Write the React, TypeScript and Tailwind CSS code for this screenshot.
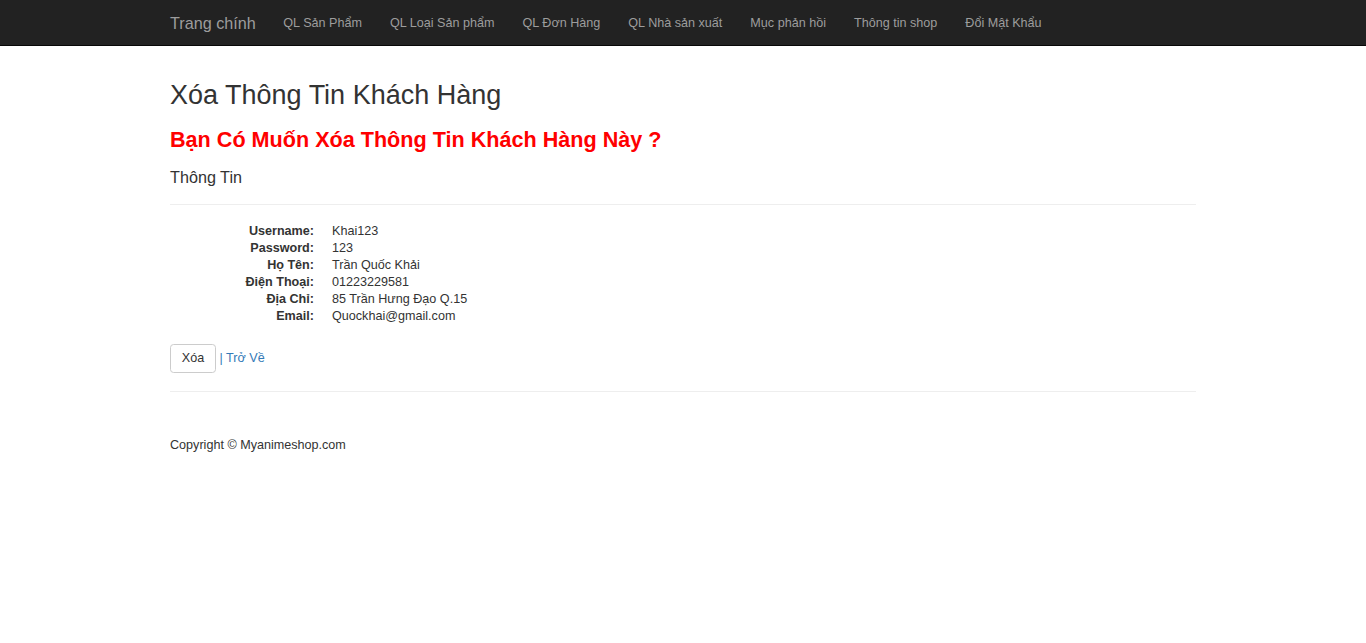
import React from "react";

const navLinks = [
  "QL Sản Phẩm",
  "QL Loại Sản phẩm",
  "QL Đơn Hàng",
  "QL Nhà sản xuất",
  "Mục phản hồi",
  "Thông tin shop",
  "Đổi Mật Khẩu",
];

const details = [
  { label: "Username:", value: "Khai123" },
  { label: "Password:", value: "123" },
  { label: "Họ Tên:", value: "Trần Quốc Khải" },
  { label: "Điện Thoại:", value: "01223229581" },
  { label: "Địa Chỉ:", value: "85 Trần Hưng Đạo Q.15" },
  { label: "Email:", value: "Quockhai@gmail.com" },
];

export default function App() {
  return (
    <div className="min-h-[643px] bg-white font-['Liberation_Sans',Arial,sans-serif] text-[12.6px] leading-[17px] text-[#333]">
      {/* navbar */}
      <nav className="h-[46px] border-b border-[#080808] bg-[#222]">
        <div className="mx-auto flex h-[45px] w-[1026px] items-center">
          <a href="#" className="pr-[13.5px] text-[16.2px] leading-[18px] text-[#9d9d9d]">
            Trang chính
          </a>
          <ul className="flex">
            {navLinks.map((l) => (
              <li key={l}>
                <a href="#" className="block px-[14px] leading-[18px] text-[#9d9d9d]">
                  {l}
                </a>
              </li>
            ))}
          </ul>
        </div>
      </nav>

      <div className="mx-auto w-[1026px]">
        <h2 className="mt-[35px] text-[27px] leading-[29.7px]">Xóa Thông Tin Khách Hàng</h2>
        <h3 className="mt-[17px] text-[21.6px] font-bold leading-[23.76px] text-[#f00]">
          Bạn Có Muốn Xóa Thông Tin Khách Hàng Này ?
        </h3>
        <h4 className="mt-[18px] text-[16.2px] leading-[17.82px]">Thông Tin</h4>
        <hr className="mt-[17px] border-[#eee]" />

        <dl className="mt-[18px]">
          {details.map((d) => (
            <div key={d.label} className="flex">
              <dt className="w-[144px] text-right font-bold">{d.label}</dt>
              <dd className="ml-[18px]">{d.value}</dd>
            </div>
          ))}
        </dl>

        <div className="mt-[19px] flex items-center">
          <button className="h-[29px] rounded-[3.6px] border border-[#ccc] bg-white px-[10.8px] text-[#333]">
            Xóa
          </button>
          <span>&nbsp;</span>
          <a href="#" className="-mt-[1px] text-[#337ab7]">
            | Trở Về
          </a>
        </div>

        <hr className="mt-[18px] border-[#eee]" />
        <footer className="mt-[45px]">
          <p>Copyright © Myanimeshop.com</p>
        </footer>
      </div>
    </div>
  );
}
